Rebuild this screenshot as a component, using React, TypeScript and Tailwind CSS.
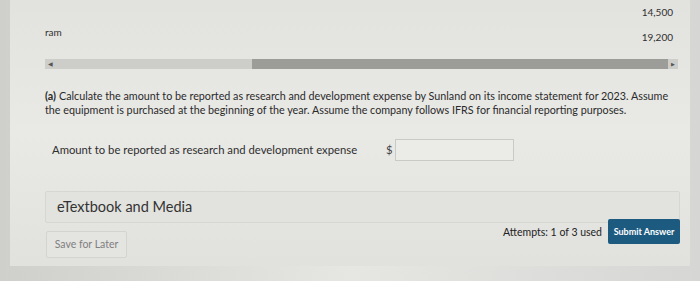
export default function App() {
  return (
    <div
      className="w-[700px] h-[281px] overflow-hidden bg-gradient-to-r from-[#cfcfcc] via-[#e6e6e3] to-[#d6d6d4] text-[#2f2f2f]"
      style={{ fontFamily: 'Lato, "Open Sans", sans-serif' }}
    >
      <div className="h-[266px] bg-gradient-to-b from-[#e2e2df] via-[#e9e9e6] to-[#e1e1de] mx-[10px] pt-[6px] pl-[35px] pr-[16px]">
        {/* table remnants */}
        <div className="flex justify-end text-[10px] leading-[12px] pr-[1px]">14,500</div>
        <div className="flex justify-between items-end text-[10px] leading-[12px] pr-[1px] mt-[8px]">
          <span className="mb-[5px]">ram</span>
          <span>19,200</span>
        </div>

        {/* horizontal scrollbar */}
        <div className="flex items-center h-[10px] mt-[16px] bg-[#cdcdca] mr-[-4px]">
          <span className="w-[10px] text-[6px] text-center leading-[10px] text-[#555]">◀</span>
          <div className="w-[197px]" />
          <div className="flex-1 h-full bg-[#9c9c99]" />
          <span className="w-[10px] text-[5px] text-center leading-[10px] text-[#555]">▶</span>
        </div>

        {/* question */}
        <div className="mt-[20px] mr-[-5px] text-[10.75px] leading-[14px] text-[#2a2a2a] whitespace-nowrap">
          <div className="flex gap-[3px]">
            <b>(a)</b>
            <span>Calculate the amount to be reported as research and development expense by Sunland on its income statement for 2023. Assume</span>
          </div>
          <div>the equipment is purchased at the beginning of the year. Assume the company follows IFRS for financial reporting purposes.</div>
        </div>

        <div className="flex items-center mt-[22px] pl-[7px] text-[11.3px]">
          <span className="w-[334px]">Amount to be reported as research and development expense</span>
          <span className="w-[9px] text-[#444]">$</span>
          <div className="w-[119px] h-[22px] border border-[#c9c9c6] bg-[#ebebe8]" />
        </div>

        {/* eTextbook */}
        <div className="mt-[30px] mr-[-6px] h-[32px] flex items-center pl-[11px] border border-[#d6d6d3] rounded-[2px] bg-[#e2e2df] text-[14.5px] text-[#333]">
          eTextbook and Media
        </div>

        <div className="flex justify-between items-start mr-[-6px] mt-[-4px]">
          <div className="mt-[12px] ml-[1px] w-[81px] h-[27px] flex items-center justify-center border border-[#d3d3d0] rounded-[2px] bg-[#e4e4e1] text-[10.5px] text-[#808080]">
            Save for Later
          </div>
          <div className="flex items-center">
            <span className="text-[10.5px] text-[#222] mr-[6px] mt-[2px]">Attempts: 1 of 3 used</span>
            <div className="w-[72px] h-[25px] flex items-center justify-center rounded-[2px] bg-[#1d5a80] text-white text-[9px] font-bold">
              Submit Answer
            </div>
          </div>
        </div>
      </div>
    </div>
  );
}
